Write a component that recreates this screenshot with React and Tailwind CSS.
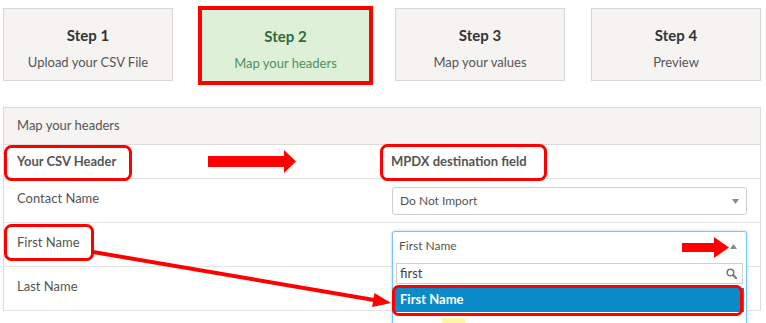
import React from 'react';

const steps = [
    { title: 'Step 1', label: 'Upload your CSV File' },
    { title: 'Step 2', label: 'Map your headers', active: true },
    { title: 'Step 3', label: 'Map your values' },
    { title: 'Step 4', label: 'Preview' },
];

const rows = ['Contact Name', 'First Name', 'Last Name'];

const Caret = ({ up }) => (
    <svg width="7" height="5" viewBox="0 0 7 5" className="shrink-0">
        {up ? <polygon points="0,5 7,5 3.5,0" fill="#8a8a8a" /> : <polygon points="0,0 7,0 3.5,5" fill="#8a8a8a" />}
    </svg>
);

const StepBox = ({ step, className }) => (
    <div
        className={`flex flex-col items-center justify-center pt-[6px] ${className} ${step.active
            ? 'bg-[#dff0d8] border-[4px] border-[#ff0000]'
            : 'bg-[#f5f4f2] border border-[#d6d6d2]'
            }`}
    >
        <div className={`text-[15px] font-bold leading-[20px] ${step.active ? 'text-[#2e6b3c]' : 'text-[#333]'}`}>
            {step.title}
        </div>
        <div className={`text-[13px] leading-[18px] mt-[8px] ${step.active ? 'text-[#4e9160]' : 'text-[#555]'}`}>
            {step.label}
        </div>
    </div>
);

export default function App() {
    return (
        <div className="relative w-[766px] h-[323px] overflow-hidden bg-white font-['Lato',sans-serif] text-[#555]">
            {/* wizard steps */}
            <div className="flex items-start h-[107px] pt-[6px]">
                <StepBox step={steps[0]} className="ml-[3px] mt-[2px] w-[170px] h-[73px]" />
                <StepBox step={steps[1]} className="ml-[25px] w-[175px] h-[79px]" />
                <StepBox step={steps[2]} className="ml-[22px] mt-[2px] w-[170px] h-[73px]" />
                <StepBox step={steps[3]} className="ml-[26px] mt-[2px] w-[170px] h-[73px]" />
            </div>

            {/* mapping panel */}
            <div className="ml-[3px] w-[758px] border border-[#dcdcd8] border-b-0">
                <div className="h-[37px] flex items-center px-[13px] bg-[#f5f4f2] border-b border-[#dcdcd8] text-[13px]">
                    Map your headers
                </div>
                <div className="grid grid-cols-[376px_1fr] h-[34px] items-center border-b border-[#e4e4e2] text-[13px] font-bold">
                    <div className="pl-[13px]">Your CSV Header</div>
                    <div className="pl-[11px]">MPDX destination field</div>
                </div>
                {rows.map((name, i) => (
                    <div key={name} className="grid grid-cols-[376px_1fr] h-[44px] items-start border-b border-[#e4e4e2] text-[13px]">
                        <div className="pl-[13px] pt-[10px] leading-[18px]">{name}</div>
                        <div className="pl-[12px] pr-[13px] pt-[8px]">
                            {i === 0 && (
                                <div className="h-[28px] flex items-center justify-between pl-[7px] pr-[7px] border border-[#cfcfcf] rounded-[3px] text-[12px]">
                                    <span>Do Not Import</span>
                                    <Caret />
                                </div>
                            )}
                        </div>
                    </div>
                ))}
            </div>

            {/* open select dropdown */}
            <div className="absolute left-[392px] top-[231px] w-[355px] h-[120px] bg-white border border-[#7cc3ee] rounded-[3px] shadow-[0_0_3px_rgba(102,175,233,0.6)] text-[12px]">
                <div className="h-[28px] flex items-center justify-between pl-[6px] pr-[9px]">
                    <span>First Name</span>
                    <Caret up />
                </div>
                <div className="mx-[3px] mt-[3px] h-[21px] flex items-center justify-between pl-[3px] pr-[5px] border border-[#cfcfcf]">
                    <span className="text-[#444] text-[13px]">first</span>
                    <svg width="11" height="11" viewBox="0 0 11 11">
                        <circle cx="4.5" cy="4.5" r="3.3" fill="none" stroke="#777" strokeWidth="1.5" />
                        <line x1="7" y1="7" x2="10.3" y2="10.3" stroke="#777" strokeWidth="2" strokeLinecap="round" />
                    </svg>
                </div>
                <div className="mx-[2px] mt-[4px] h-[24px] flex items-center pl-[5px] bg-[#0a8ac8] text-white font-bold text-[13px]">
                    First Name
                </div>
                {/* next option, only its match highlight is in view */}
                <div className="ml-[49px] mt-[6px] w-[23px] h-[10px] bg-[#fdf6a8]" />
            </div>

            {/* annotations */}
            <svg className="absolute inset-0 pointer-events-none" width="766" height="323" viewBox="0 0 766 323">
                <g fill="none" stroke="#ff0000" strokeWidth="3">
                    <rect x="5.5" y="146.5" width="125" height="33" rx="6" />
                    <rect x="381.5" y="145.5" width="164" height="34" rx="6" />
                    <rect x="5.5" y="225.5" width="87" height="34" rx="6" />
                    <rect x="393.5" y="286.5" width="348" height="28" rx="5" />
                </g>
                <polygon points="208,156 284,156 284,150 296,161.5 284,173 284,167 208,167" fill="#ff0000" />
                <polygon points="682,243 714,243 714,237 729,247.5 714,258 714,252 682,252" fill="#ff0000" />
                <line x1="93" y1="252" x2="374" y2="300" stroke="#ff0000" strokeWidth="4" />
                <polygon points="391,303 372.1,306.9 374.5,293.1" fill="#ff0000" />
            </svg>
        </div>
    );
}
